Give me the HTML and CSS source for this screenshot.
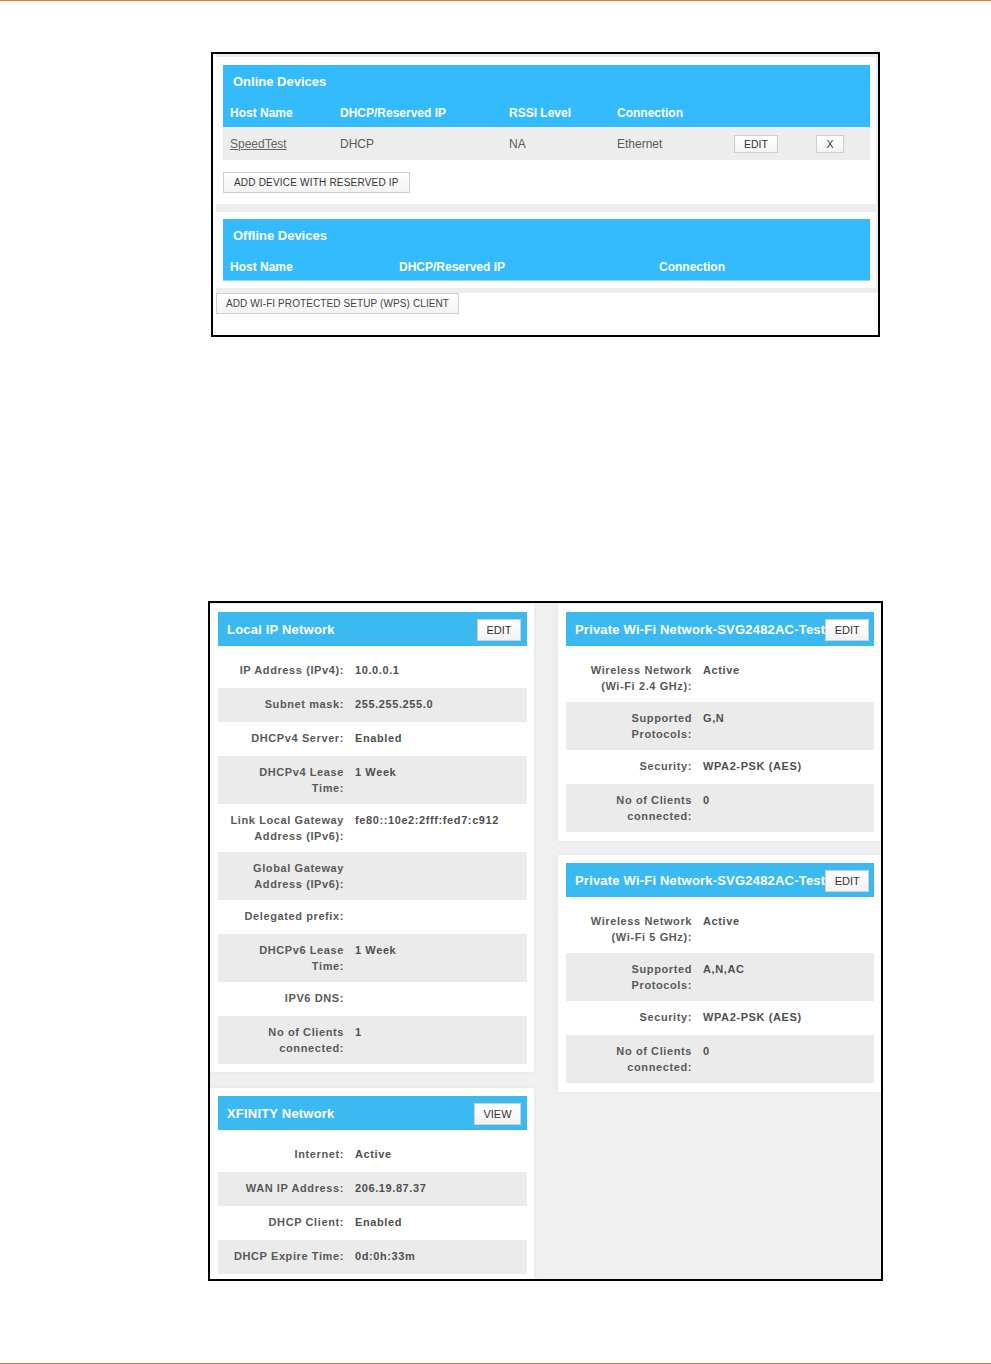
FILE: index.html
```html
<!DOCTYPE html>
<html lang="en">
<head>
<meta charset="utf-8">
<title>Connected Devices and Gateway Status</title>
<link rel="stylesheet" href="styles.css">
</head>
<body>
<div class="topline"></div>

<div class="shot1">
  <div class="s1-wrap">
    <section class="dev-card online">
      <div class="dev-head">
        <div class="dev-title">Online Devices</div>
        <div class="cols online-cols">
          <span>Host Name</span><span>DHCP/Reserved IP</span><span>RSSI Level</span><span>Connection</span><span></span><span></span>
        </div>
      </div>
      <div class="dev-row online-cols">
        <span><a class="host" href="#">SpeedTest</a></span>
        <span>DHCP</span>
        <span>NA</span>
        <span>Ethernet</span>
        <span><button class="btn small edit">EDIT</button></span>
        <span><button class="btn small x">X</button></span>
      </div>
      <button class="btn add">ADD DEVICE WITH RESERVED IP</button>
    </section>
    <section class="dev-card offline">
      <div class="dev-head">
        <div class="dev-title">Offline Devices</div>
        <div class="cols offline-cols">
          <span>Host Name</span><span>DHCP/Reserved IP</span><span>Connection</span>
        </div>
      </div>
    </section>
  </div>
  <button class="btn wps">ADD WI-FI PROTECTED SETUP (WPS) CLIENT</button>
</div>

<div class="shot2">
  <div class="col left">
    <section class="card">
      <div class="card-head"><span class="card-title">Local IP Network</span><button class="btn hbtn">EDIT</button></div>
      <div class="row"><span class="lbl">IP Address (IPv4):</span><span class="val">10.0.0.1</span></div>
      <div class="row alt"><span class="lbl">Subnet mask:</span><span class="val">255.255.255.0</span></div>
      <div class="row"><span class="lbl">DHCPv4 Server:</span><span class="val">Enabled</span></div>
      <div class="row alt"><span class="lbl">DHCPv4 Lease Time:</span><span class="val">1 Week</span></div>
      <div class="row"><span class="lbl">Link Local Gateway Address (IPv6):</span><span class="val">fe80::10e2:2fff:fed7:c912</span></div>
      <div class="row alt"><span class="lbl">Global Gateway Address (IPv6):</span><span class="val"></span></div>
      <div class="row"><span class="lbl">Delegated prefix:</span><span class="val"></span></div>
      <div class="row alt"><span class="lbl">DHCPv6 Lease Time:</span><span class="val">1 Week</span></div>
      <div class="row"><span class="lbl">IPV6 DNS:</span><span class="val"></span></div>
      <div class="row alt"><span class="lbl">No of Clients connected:</span><span class="val">1</span></div>
    </section>
    <section class="card">
      <div class="card-head"><span class="card-title">XFINITY Network</span><button class="btn hbtn view">VIEW</button></div>
      <div class="row"><span class="lbl">Internet:</span><span class="val">Active</span></div>
      <div class="row alt"><span class="lbl">WAN IP Address:</span><span class="val">206.19.87.37</span></div>
      <div class="row"><span class="lbl">DHCP Client:</span><span class="val">Enabled</span></div>
      <div class="row alt"><span class="lbl">DHCP Expire Time:</span><span class="val">0d:0h:33m</span></div>
    </section>
  </div>
  <div class="col right">
    <section class="card rcard">
      <div class="card-head"><span class="card-title">Private Wi-Fi Network-SVG2482AC-Test</span><button class="btn hbtn">EDIT</button></div>
      <div class="row"><span class="lbl">Wireless Network (Wi-Fi 2.4 GHz):</span><span class="val">Active</span></div>
      <div class="row alt"><span class="lbl">Supported Protocols:</span><span class="val">G,N</span></div>
      <div class="row"><span class="lbl">Security:</span><span class="val">WPA2-PSK (AES)</span></div>
      <div class="row alt"><span class="lbl">No of Clients connected:</span><span class="val">0</span></div>
    </section>
    <section class="card rcard">
      <div class="card-head"><span class="card-title">Private Wi-Fi Network-SVG2482AC-Test</span><button class="btn hbtn">EDIT</button></div>
      <div class="row"><span class="lbl">Wireless Network (Wi-Fi 5 GHz):</span><span class="val">Active</span></div>
      <div class="row alt"><span class="lbl">Supported Protocols:</span><span class="val">A,N,AC</span></div>
      <div class="row"><span class="lbl">Security:</span><span class="val">WPA2-PSK (AES)</span></div>
      <div class="row alt"><span class="lbl">No of Clients connected:</span><span class="val">0</span></div>
    </section>
  </div>
</div>

<div class="botline"></div>
</body>
</html>
```

FILE: styles.css
```css
html, body {
  margin: 0;
  padding: 0;
  background: #fff;
}
body {
  font-family: "Liberation Sans", Arial, sans-serif;
  color: #555;
}

.topline {
  height: 1px;
  background: #e8781f;
}
.botline {
  height: 1px;
  margin-top: 82px;
  background: #d2783a;
}

/* ---------- generic buttons ---------- */
.btn {
  font-family: "Liberation Sans", Arial, sans-serif;
  margin: 0;
  border: 1px solid #cfcfcf;
  background: linear-gradient(#ffffff, #f3f3f3);
  color: #333;
  box-sizing: border-box;
  cursor: pointer;
  white-space: nowrap;
}

/* ---------- screenshot 1: devices ---------- */
.shot1 {
  margin: 51px 0 0 211px;
  width: 669px;
  height: 285px;
  box-sizing: border-box;
  border: 2px solid #000;
  padding-left: 3px;
}
.s1-wrap {
  background: #ededed;
  padding: 3px 2px 5px 0;
  display: flex;
  flex-direction: column;
  gap: 8px;
}
.dev-card {
  background: #fff;
  padding: 8px 6px 11px 7px;
}
.dev-card.offline {
  padding: 7px 6px 7px 7px;
}
.dev-head {
  background: #34bbfd;
  color: #fff;
  height: 62px;
}
.dev-card.offline .dev-head {
  box-shadow: inset 0 -1px 0 #8fd8fb;
}
.dev-title {
  height: 34px;
  line-height: 34px;
  padding-left: 10px;
  font-size: 13px;
  font-weight: bold;
}
.cols {
  display: grid;
  height: 28px;
  align-items: center;
  padding-left: 7px;
  font-size: 12px;
  font-weight: bold;
}
.online-cols {
  grid-template-columns: 110px 169px 108px 117px 82px 1fr;
}
.offline-cols {
  grid-template-columns: 169px 260px 1fr;
}
.dev-row {
  display: grid;
  align-items: center;
  height: 33px;
  padding-left: 7px;
  background: #ededed;
  font-size: 12px;
  color: #5a5a5a;
}
.host {
  color: #666;
  text-decoration: underline;
}
.btn.small {
  height: 18px;
  font-size: 10.5px;
  padding: 0;
  display: block;
}
.btn.edit { width: 44px; }
.btn.x { width: 28px; }
.btn.add {
  display: block;
  margin-top: 12px;
  height: 21px;
  padding: 0 10px;
  font-size: 10px;
  letter-spacing: 0.2px;
}
.btn.wps {
  display: block;
  height: 21px;
  padding: 0 9px;
  font-size: 10px;
  letter-spacing: 0.1px;
  color: #444;
}

/* ---------- screenshot 2: gateway status ---------- */
.shot2 {
  margin: 264px 0 0 208px;
  width: 675px;
  height: 680px;
  box-sizing: border-box;
  border: 2px solid #000;
  background: #f0f0f0;
  padding-top: 1px;
  overflow: hidden;
  display: grid;
  grid-template-columns: 324px 323px;
  column-gap: 24px;
  align-items: start;
}
.col {
  display: flex;
  flex-direction: column;
  gap: 16px;
}
.col.right {
  gap: 14px;
}
.card {
  background: #fff;
  padding: 8px 7px 8px 8px;
  box-shadow: 0 0 6px rgba(0, 0, 0, 0.05);
}
.card.rcard {
  padding-bottom: 9px;
}
.card-head {
  height: 34px;
  background: #3bb9f1;
  display: flex;
  align-items: center;
  justify-content: space-between;
  padding: 0 6px 0 9px;
  margin-bottom: 8px;
}
.card-title {
  color: #fff;
  font-size: 13px;
  font-weight: bold;
  letter-spacing: 0.2px;
  white-space: nowrap;
}
.btn.hbtn {
  flex: none;
  height: 22px;
  width: 44px;
  padding: 0;
  font-size: 11px;
  margin-top: 1px;
}
.btn.hbtn.view {
  width: 47px;
}

.row {
  display: grid;
  grid-template-columns: 126px 1fr;
  column-gap: 11px;
  min-height: 34px;
  box-sizing: border-box;
  padding: 8px 0;
  line-height: 16px;
  font-size: 11px;
  font-weight: bold;
  letter-spacing: 0.6px;
}
.row.alt {
  background: #ebebeb;
}
.lbl {
  text-align: right;
  padding-left: 8px;
  color: #595959;
}
.val {
  color: #4f4f4f;
}
```
